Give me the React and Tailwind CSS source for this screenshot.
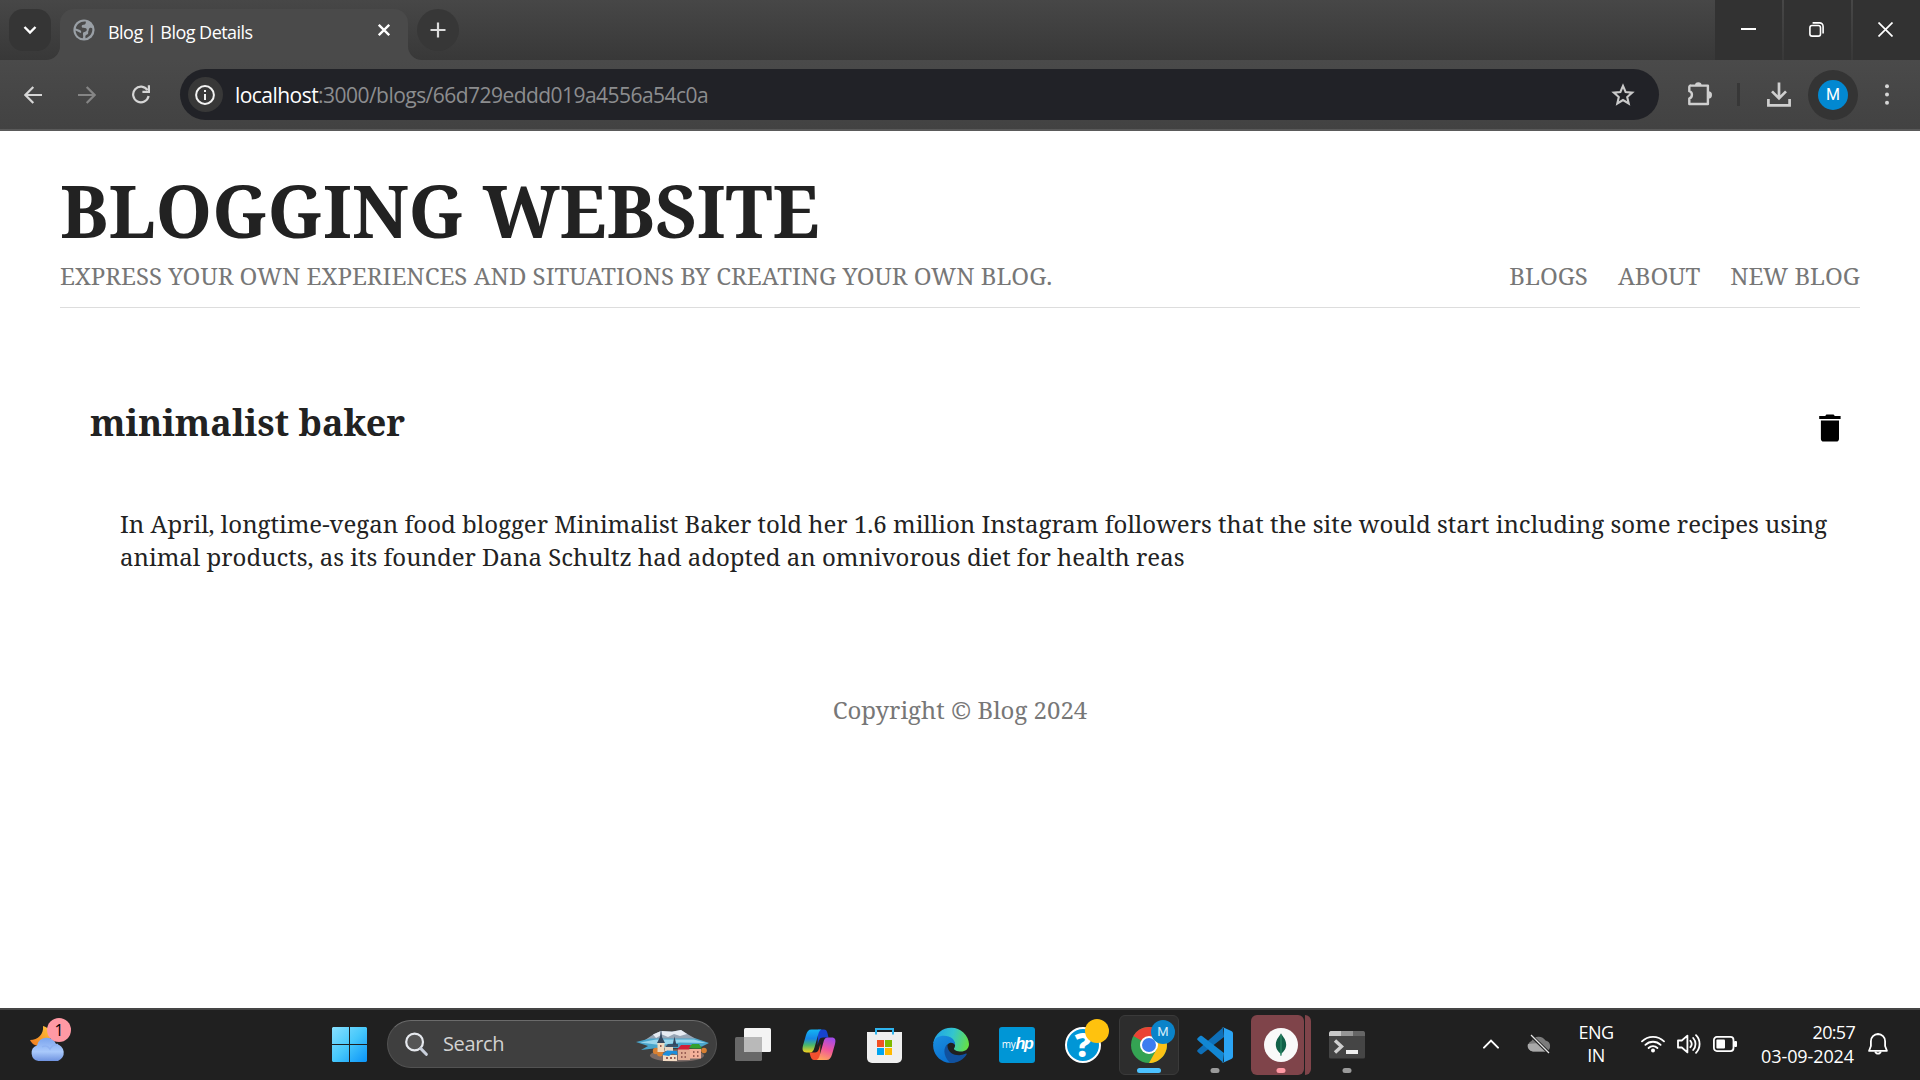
function ChromeTabStrip() {
  return (
    <div className="flex h-[60px] w-full bg-gradient-to-b from-[#474747] to-[#383838]">
      <div className="flex h-[60px] w-[60px] shrink-0 items-start pt-[9px] pl-[9px]">
        <button className="flex h-[42px] w-[42px] items-center justify-center rounded-[14px] bg-[#353535]">
          <svg width="14" height="10" viewBox="0 0 14 10" fill="none" stroke="#fff" strokeWidth="2.4">
            <path d="M1.5 2 L7 7.5 L12.5 2" />
          </svg>
        </button>
      </div>
      <div className="relative mt-[9px] h-[51px] w-[348px] shrink-0">
        <div className="flex h-full w-full items-center rounded-t-[14px] bg-[#4a4a4a] pl-[13px]">
          <svg className="mb-[10px]" width="22" height="22" viewBox="0 0 22 22">
            <circle cx="11" cy="11" r="10.6" fill="#9aa0a6" />
            <path d="M13 2.7 C12.4 4.6 12.8 5.6 10.6 5.7 C8.6 5.8 8.6 7 8.8 8 C9 9 9.9 8.8 11.8 8.9 C14 9 14.2 10.8 13.4 12 C12.5 13.2 10.4 12.6 10 14 C9.6 15.6 10.8 17 9.8 19.3 C5.6 18.8 2.8 15.4 2.6 11.4 L7.6 13.9 C8.8 13.4 8.2 11.6 7 10.9 L2.8 9.4 C3.6 5.2 8 1.9 13 2.7 Z" fill="#4a4a4a" />
            <path d="M16.4 9.2 C17.6 8.4 18.8 8.6 19.3 9.6 C19.8 14.2 16.8 18.2 12.6 19.3 C11.9 17.3 12.6 16.2 14 15.6 C16.2 14.6 14.6 13.2 15.4 12 C16 11.2 15.4 10 16.4 9.2 Z" fill="#4a4a4a" />
          </svg>
          <span className="mb-[6px] ml-[13px] grow whitespace-nowrap font-['Open_Sans',sans-serif] text-[18px] leading-6 tracking-[-0.53px] text-white">
            Blog | Blog Details
          </span>
          <svg className="mr-[18px] mb-[9px]" width="12" height="12" viewBox="0 0 12 12" stroke="#fff" strokeWidth="2.3">
            <path d="M0.8 0.8 L11.2 11.2 M11.2 0.8 L0.8 11.2" />
          </svg>
        </div>
        <svg className="absolute bottom-0 -left-[14px]" width="14" height="14" viewBox="0 0 14 14">
          <path d="M14 0 V14 H0 A14 14 0 0 0 14 0 Z" fill="#4a4a4a" />
        </svg>
        <svg className="absolute -right-[14px] bottom-0" width="14" height="14" viewBox="0 0 14 14">
          <path d="M0 0 V14 H14 A14 14 0 0 1 0 0 Z" fill="#4a4a4a" />
        </svg>
      </div>
      <button className="mt-[9px] ml-[9px] flex h-[42px] w-[42px] shrink-0 items-center justify-center rounded-full bg-[#373737]">
        <svg width="16" height="16" viewBox="0 0 16 16" stroke="#dcdcdc" strokeWidth="2.2">
          <path d="M8 0.5 V15.5 M0.5 8 H15.5" />
        </svg>
      </button>
      <div className="grow" />
      <div className="flex gap-[2px]">
        <button className="flex h-[60px] w-[67px] items-center justify-center bg-[#323232]">
          <svg className="mb-[2px]" width="15" height="2" viewBox="0 0 15 2">
            <rect width="15" height="2" fill="#fff" />
          </svg>
        </button>
        <button className="flex h-[60px] w-[67px] items-center justify-center bg-[#323232]">
          <svg className="mr-[2px] mb-[1px]" width="15" height="15" viewBox="0 0 15 15" fill="none" stroke="#fff" strokeWidth="1.6">
            <rect x="0.9" y="3.5" width="10.6" height="10.6" rx="2.2" />
            <path d="M3.6 0.9 H10.6 A3.5 3.5 0 0 1 14.1 4.4 V11.4" />
          </svg>
        </button>
        <button className="flex h-[60px] w-[67px] items-center justify-center bg-[#323232]">
          <svg className="mr-[3px] mb-[1px]" width="15" height="15" viewBox="0 0 15 15" stroke="#fff" strokeWidth="1.7">
            <path d="M0.5 0.5 L14.5 14.5 M14.5 0.5 L0.5 14.5" />
          </svg>
        </button>
      </div>
    </div>
  );
}

function Toolbar() {
  return (
    <div className="flex h-[71px] w-full items-center border-b-2 border-[#5a5a5a] bg-gradient-to-b from-[#4a4a4a] to-[#424242]">
      <svg className="ml-[24px] shrink-0" width="18" height="18" viewBox="0 0 18 18" fill="none" stroke="#d6d6d6" strokeWidth="2.2">
        <path d="M18 9 H1.8 M9.3 1 L1.4 9 L9.3 17" />
      </svg>
      <svg className="ml-[36px] shrink-0" width="18" height="18" viewBox="0 0 18 18" fill="none" stroke="#858585" strokeWidth="2.2">
        <path d="M0 9 H16.2 M8.7 1 L16.6 9 L8.7 17" />
      </svg>
      <svg className="ml-[36px] shrink-0" width="18" height="19" viewBox="0 0 18 19" fill="none" stroke="#d6d6d6" strokeWidth="2.2">
        <path d="M15.5 5.2 A7.8 7.8 0 1 0 16.6 11" />
        <path d="M16.9 0.3 V6.8 H10.4" />
      </svg>
      <div className="ml-[30px] flex h-[51px] w-[1479px] shrink-0 items-center rounded-full bg-[#212227] pl-[8px]">
        <span className="flex h-[35px] w-[35px] items-center justify-center rounded-full bg-[#383838]">
          <svg className="mr-px" width="20" height="20" viewBox="0 0 20 20">
            <circle cx="10" cy="10" r="8.9" fill="none" stroke="#f2f2f2" strokeWidth="2" />
            <rect x="9" y="5" width="2" height="2" fill="#f2f2f2" />
            <rect x="9" y="9" width="2" height="6" fill="#f2f2f2" />
          </svg>
        </span>
        <span className="ml-[12px] grow whitespace-nowrap font-['Open_Sans',sans-serif] text-[21px] leading-7 tracking-[-0.54px] text-[#8c8d8f]">
          <span className="text-white">localhost</span>:3000/blogs/66d729eddd019a4556a54c0a
        </span>
        <svg className="mr-[24px]" width="24" height="24" viewBox="0 0 24 24" fill="none" stroke="#c9c9c9" strokeWidth="2.1">
          <path d="M12 2.9 L14.6 9 L21.2 9.6 L16.2 14 L17.7 20.5 L12 17 L6.3 20.5 L7.8 14 L2.8 9.6 L9.4 9 Z" />
        </svg>
      </div>
      <svg className="mb-[2px] ml-[28px] shrink-0" width="26" height="25" viewBox="0 0 26 25">
        <path d="M4 4.6 H20.9 V23 H2.3 V17.4 C5.8 16.6 5.8 11.1 2.3 10.2 V6 A1.4 1.4 0 0 1 4 4.6 Z" fill="none" stroke="#cfcfcf" strokeWidth="2.4" strokeLinejoin="round" />
        <path d="M8 4.5 A3.3 3.3 0 0 1 14.6 4.5 Z M21.4 10.3 A3.6 3.6 0 0 1 21.4 17.5 Z" fill="#cfcfcf" />
      </svg>
      <div className="ml-[24px] h-[23px] w-[3px] shrink-0 bg-[#373737]" />
      <svg className="ml-[27px] shrink-0" width="24" height="25" viewBox="0 0 24 25" fill="none" stroke="#cfcfcf" strokeWidth="2.7">
        <path d="M12 0.5 V16 M5 9.4 L12 16.4 L19 9.4 M1.4 17 V23.4 H22.6 V17" />
      </svg>
      <div className="ml-[17px] flex h-[50px] w-[50px] shrink-0 items-center justify-center rounded-full bg-[#343434]">
        <span className="flex h-[30px] w-[30px] items-center justify-center rounded-full bg-[#0288d1] pt-px font-[Roboto,sans-serif] text-[16px] leading-none text-white">
          M
        </span>
      </div>
      <svg className="ml-[27px] shrink-0" width="4" height="21" viewBox="0 0 4 21" fill="#d6d6d6">
        <circle cx="2" cy="2.2" r="2" />
        <circle cx="2" cy="10.5" r="2" />
        <circle cx="2" cy="18.8" r="2" />
      </svg>
    </div>
  );
}

function BlogPage() {
  return (
    <div className="flex h-[877px] w-full flex-col bg-white px-[60px] pt-[30px] font-['Noto_Serif',serif] text-[24px] leading-[33px] text-[#222222]">
      <header className="border-b border-[#dddddd] pb-[15px]">
        <h1 className="text-[72px] leading-[98px] font-bold whitespace-nowrap">BLOGGING WEBSITE</h1>
        <div className="flex justify-between whitespace-nowrap text-[#777777]">
          <p>EXPRESS YOUR OWN EXPERIENCES AND SITUATIONS BY CREATING YOUR OWN BLOG.</p>
          <nav className="flex gap-[30px]">
            <a>BLOGS</a>
            <a>ABOUT</a>
            <a>NEW BLOG</a>
          </nav>
        </div>
      </header>
      <main className="mt-[90px] px-[30px]">
        <div className="flex items-start justify-between">
          <h2 className="text-[36px] leading-[49px] font-bold whitespace-nowrap">minimalist baker</h2>
          <svg className="mt-[16px] -mr-[11px]" width="22" height="28" viewBox="0 0 22 28" fill="#000">
            <path d="M6.2 2 L7.4 0.6 H14.6 L15.8 2 H21.6 V5 H0.2 V2 Z" />
            <path d="M1.9 6.4 H20 V24.8 A2.8 2.8 0 0 1 17.2 27.6 H4.7 A2.8 2.8 0 0 1 1.9 24.8 Z" />
          </svg>
        </div>
        <p className="mt-[60px] ml-[30px] whitespace-nowrap">
          In April, longtime-vegan food blogger Minimalist Baker told her 1.6 million Instagram followers that the site would start including some recipes using
          <br />
          animal products, as its founder Dana Schultz had adopted an omnivorous diet for health reas
        </p>
      </main>
      <footer className="mt-[120px] text-center text-[#777777]">Copyright © Blog 2024</footer>
    </div>
  );
}

function VillageArt() {
  return (
    <svg width="74" height="36" viewBox="0 0 74 36">
      <path d="M9 13 L18 7 L25 4 L36 4.5 L45 3 L53 8 L62 13 Z" fill="#97a5b5" />
      <path d="M17 7.5 L25 4 L36 4.8 L45 3 L51 7 L44 9 L38 7 L32 10 L26 7.5 L20 11 Z" fill="#e6ebf2" />
      <path d="M0 15 L14 11.5 H60 L73 16 L66 19.5 L58 21 H22 L5 23 L12 19 Z" fill="#4aa5cb" />
      <path d="M4 15.5 L20 12.5 L58 12.5 L70 16 L44 15.5 L24 18 Z" fill="#9ad6ec" />
      <ellipse cx="41" cy="28.5" rx="27" ry="6.3" fill="#7b6a66" />
      <g fill="#d98032">
        <circle cx="20" cy="24" r="3.2" />
        <circle cx="25" cy="23" r="3" />
        <circle cx="24" cy="26.5" r="3" />
        <circle cx="68" cy="23.5" r="2.8" />
      </g>
      <path d="M21.5 16 H28.5 V25 H21.5 Z" fill="#efd9bf" />
      <path d="M21 16 L24 10 L25 0.5 L26 10 L29 16 Z" fill="#33475f" />
      <path d="M29 19 L37 18 V24 H29 Z" fill="#e8d5c2" />
      <path d="M29 20 L32 17 H42 V20 Z" fill="#3a5068" />
      <path d="M36.6 18 L38.5 9.5 L40.4 18 Z" fill="#33475f" />
      <path d="M42 22 H54 V33 H42 Z" fill="#e3ad94" />
      <path d="M41 22.5 L45 18 H55 L53 22.5 Z" fill="#d01f37" />
      <path d="M54 22 H65 V31.5 H54 Z" fill="#f5b09a" />
      <path d="M53 21 L56 17 H63 L66 21.5 H57 Z" fill="#33a02c" />
      <path d="M27 28 H41 V34 H27 Z" fill="#f3dcc4" />
      <path d="M26 28 L31 23.5 L41 24 L41.5 28 L36 26.5 L33 29 Z" fill="#1c8fdd" />
      <path d="M30 30h2v2h-2z M34 30h2v2h-2z M38 30h1.5v2H38z M45 25h1.5v2H45z M48.5 25H50v2h-1.5z M45 29h1.5v2H45z M48.5 29H50v2h-1.5z M57 24h1.5v2H57z M61 24h1.5v2H61z M57 28h1.5v2H57z M61 28h1.5v2H61z M24 18h1.5v2H24z" fill="#9a5f54" />
    </svg>
  );
}

function Slot({ children, pill }) {
  return (
    <div className="relative flex h-full w-[66px] shrink-0 items-center justify-center pb-px">
      {children}
      {pill && <span className={"absolute top-[58px] left-1/2 h-[5px] -translate-x-1/2 rounded-full " + pill} />}
    </div>
  );
}

function Taskbar() {
  return (
    <div className="flex h-[72px] w-full items-stretch border-t-2 border-[#454545] bg-[#202020] font-['Open_Sans',sans-serif] text-white">
      <div className="relative ml-[30px] w-[40px] shrink-0">
        <svg className="mt-[16px]" width="36" height="36" viewBox="0 0 36 36">
          <defs>
            <linearGradient id="moon" x1="1" y1="0" x2="0" y2="1">
              <stop offset="0" stopColor="#ffc83d" />
              <stop offset="1" stopColor="#f0761b" />
            </linearGradient>
            <linearGradient id="cloud" x1="0" y1="0" x2="0" y2="1">
              <stop offset="0" stopColor="#7ba4ee" />
              <stop offset="0.6" stopColor="#a9c9fb" />
              <stop offset="1" stopColor="#6f93e0" />
            </linearGradient>
          </defs>
          <path d="M13 0 C14 8 8 14 0 14 C2 18.5 6 20 10 20 H20 V4 C18 2 16 1 13 0 Z" fill="url(#moon)" />
          <path d="M8.5 35 A8 8 0 0 1 7 19.5 A10 10 0 0 1 26 18 A8.8 8.8 0 0 1 28 35 Z" fill="url(#cloud)" />
          <path d="M12 21 C15 19 18 20 20 23 C22 19.5 25 18.3 28 18.5" fill="none" stroke="#8fb2f2" strokeWidth="1.5" />
        </svg>
        <span className="absolute top-[8px] left-[17px] flex h-[24px] w-[24px] items-center justify-center rounded-full bg-[#ff99a4] text-[16px] leading-none text-black">
          1
        </span>
      </div>

      <svg className="mt-[17px] ml-[262px] shrink-0" width="35" height="35" viewBox="0 0 35 35">
        <defs>
          <linearGradient id="win" x1="0" y1="0" x2="1" y2="1">
            <stop offset="0" stopColor="#88e0ff" />
            <stop offset="0.5" stopColor="#46c8fb" />
            <stop offset="1" stopColor="#0a93f8" />
          </linearGradient>
        </defs>
        <path d="M1 0H17V17H0V1Z M18 0H34L35 1V17H18Z M0 18H17V35H1L0 34Z M18 18H35V34L34 35H18Z" fill="url(#win)" />
      </svg>

      <div className="mt-[10px] ml-[20px] flex h-[48px] w-[330px] shrink-0 items-center rounded-full border border-[#525252] border-t-[#6b6b6b] bg-[#3f3f3f] pl-[17px]">
        <svg width="23" height="24" viewBox="0 0 23 24">
          <circle cx="9.6" cy="10" r="8.4" fill="#555" stroke="#e6e9ee" strokeWidth="2.2" />
          <path d="M15.6 16.4 L21.3 22.3" stroke="#c9d0dc" strokeWidth="3" strokeLinecap="round" />
        </svg>
        <span className="ml-[15px] grow text-[20px] leading-7 tracking-[-0.35px] text-[#d2d2d2]">Search</span>
        <div className="mr-[6px] mt-px">
          <VillageArt />
        </div>
      </div>

      <div className="ml-[3px] flex">
        <Slot>
          <svg width="36" height="35" viewBox="0 0 36 35">
            <rect x="0" y="10" width="27" height="24" rx="1.5" fill="#686868" />
            <rect x="9" y="1" width="27" height="24" rx="1.5" fill="#f4f4f4" />
            <path d="M9 10 H27 V25 H10.5 L9 23.5 Z" fill="#b9b9b9" />
          </svg>
        </Slot>
        <Slot>
          <svg width="34" height="32" viewBox="0 0 34 32">
            <defs>
              <linearGradient id="cpA" x1="0" y1="0" x2="0" y2="1">
                <stop offset="0" stopColor="#13b5f4" />
                <stop offset="0.4" stopColor="#1686e6" />
                <stop offset="0.68" stopColor="#4cb86a" />
                <stop offset="1" stopColor="#f6d11d" />
              </linearGradient>
              <linearGradient id="cpB" x1="0.6" y1="0" x2="0.3" y2="1">
                <stop offset="0" stopColor="#a34be8" />
                <stop offset="0.5" stopColor="#f0569c" />
                <stop offset="1" stopColor="#ffa45c" />
              </linearGradient>
            </defs>
            <path d="M16 0.5 H22 C25 0.5 25.5 4 26.5 8.5 H21 C17 8.5 17 12 15.6 16 Z" fill="#1743cf" />
            <path d="M18 31 H12 C9 31 8.5 27 7.5 23.5 H13 C17 23.5 17 19 18.4 15 Z" fill="#f3502f" />
            <path d="M9.5 0.5 H19.5 C17 1.5 16.5 4.5 15.5 8 L12.5 18.5 C11.5 22 10.5 23.5 8 23.5 H4.5 C0.5 23.5 0 20.5 1 16.5 L4 6 C5 2.5 6.5 0.5 9.5 0.5 Z" fill="url(#cpA)" />
            <path d="M24.5 31 H14.5 C17 30 17.5 27 18.5 23.5 L21.5 13 C22.5 9.5 23.5 8.5 26 8.5 H29.5 C33.5 8.5 34 11 33 15 L30 25.5 C29 29 27.5 31 24.5 31 Z" fill="url(#cpB)" />
          </svg>
        </Slot>
        <Slot>
          <svg className="mt-px mr-px" width="35" height="35" viewBox="0 0 35 35">
            <path d="M0 4 H35 V30 A5 5 0 0 1 30 35 H5 A5 5 0 0 1 0 30 Z" fill="#efefef" />
            <path d="M9 6.5 V1 H26 V6.5" fill="none" stroke="#2fb4ee" strokeWidth="2" />
            <rect x="10" y="12" width="7" height="7" fill="#f25022" />
            <rect x="18" y="12" width="7" height="7" fill="#7fba00" />
            <rect x="10" y="20" width="7" height="7" fill="#00a4ef" />
            <rect x="18" y="20" width="7" height="7" fill="#ffb900" />
          </svg>
        </Slot>
        <Slot>
          <svg width="36" height="36" viewBox="0 0 36 36">
            <defs>
              <linearGradient id="edTop" x1="0" y1="0.4" x2="1" y2="0.6">
                <stop offset="0" stopColor="#1fa3e6" />
                <stop offset="0.5" stopColor="#33c5cf" />
                <stop offset="1" stopColor="#65e045" />
              </linearGradient>
              <linearGradient id="edL" x1="0" y1="0" x2="0.6" y2="1">
                <stop offset="0" stopColor="#1a8fe0" />
                <stop offset="1" stopColor="#0a6fce" />
              </linearGradient>
            </defs>
            <path d="M0.3 16 A18 18 0 0 1 36 17 C36 22 32 24.5 28 24.5 C24 24.5 20.5 23 21 21.5 C23 19 22.5 14 18 13.5 Z" fill="url(#edTop)" />
            <path d="M0.2 17 C1 11 6 8.8 11 8.8 C18 8.8 22.5 13 22 18 C19 13.5 13 16 13 22 C13 28 18 33.5 26 33.3 C22 36 17 36.3 13.5 35.4 C5.5 33.5 -0.6 26 0.2 17 Z" fill="url(#edL)" />
            <path d="M14.5 17 C10 21 10 29 17 35.8 C24 36.6 30.5 32.5 33.6 27.4 C34 26.5 33 26.4 32.4 26.8 C26 30 13.5 28 14.5 17 Z" fill="#11519e" />
          </svg>
        </Slot>
        <Slot>
          <div className="flex h-[36px] w-[36px] items-center justify-center rounded-[3px] bg-[#0096d6] pb-px leading-none whitespace-nowrap">
            <span className="text-[10px] tracking-[-0.2px]">my</span>
            <span className="font-['Liberation_Sans',sans-serif] text-[16px] font-bold tracking-[-1.4px] italic">hp</span>
          </div>
        </Slot>
        <Slot>
          <div className="flex h-[36px] w-[36px] items-center justify-center rounded-full border-2 border-white bg-[#0096d6] text-[33px] leading-none font-extrabold">
            ?
          </div>
          <span className="absolute top-[9px] left-[35px] h-[24px] w-[24px] rounded-full bg-[#ffc20e]" />
        </Slot>
        <Slot pill="z-10 w-[24px] bg-[#4cc2ff]">
          <div className="relative flex h-[60px] w-[60px] items-center justify-center rounded-[6px] border border-[#3a3a3a] bg-[#2d2d2d]">
            <svg width="36" height="36" viewBox="0 0 36 36">
              <circle cx="18" cy="18" r="18" fill="#34a353" />
              <path d="M18 18 L2.4 9 A18 18 0 0 1 33.6 9 Z" fill="#ea4335" />
              <path d="M18 9.5 H33.8 A18 18 0 0 1 18 36 L25.5 22.5 Z" fill="#fbc116" />
              <circle cx="18" cy="18" r="9" fill="#fff" />
              <circle cx="18" cy="18" r="7" fill="#3c7df0" />
            </svg>
            <span className="absolute top-[4px] left-[31px] flex h-[24px] w-[24px] items-center justify-center rounded-full bg-[#0a83c9] font-[Roboto,sans-serif] text-[13px] leading-none text-[#d4ecfa]">
              M
            </span>
          </div>
        </Slot>
        <Slot pill="w-[9px] bg-[#9a9a9a]">
          <svg width="36" height="36" viewBox="0 0 36 36">
            <path d="M26 0.5 L0.8 22.7 C0 23.5 0 24.2 0.8 25 L3 26.9 C3.6 27.4 4.4 27.4 5 26.9 L27 10 Z" fill="#0e6fb8" />
            <path d="M26 35.5 L0.8 13.3 C0 12.5 0 11.8 0.8 11 L3 9.1 C3.6 8.6 4.4 8.6 5 9.1 L27 26 Z" fill="#1287d4" />
            <path d="M26 0.2 L34.3 4 C35.4 4.6 36 5.4 36 6.5 V29.5 C36 30.6 35.4 31.4 34.3 32 L26 35.8 C25.6 35.9 24.8 35.7 24.4 35.2 C25.8 36 27 35 27 33.8 V2.2 C27 1 25.8 0 24.4 0.8 C24.8 0.3 25.6 0.1 26 0.2 Z" fill="#2ba4f4" />
          </svg>
        </Slot>
        <Slot pill="w-[9px] bg-[#ff99a4]">
          <div className="flex h-[60px] w-[60px] gap-px">
            <div className="flex w-[53px] items-center justify-center rounded-[6px] bg-[#7f444a] pl-[7px]">
              <svg width="34" height="34" viewBox="0 0 34 34">
                <circle cx="17" cy="17" r="17" fill="#f9f9f9" />
                <path d="M17 5.2 C18 8 22 10.5 22.2 16.5 C22.2 21 19.5 23.8 17.6 25.5 L17.3 28 H16.6 L16.3 25.5 C14.4 23.8 11.8 21 11.8 16.5 C12 10.5 16 8 17 5.2 Z" fill="#116149" />
                <path d="M17 7 V27" stroke="#3fa37b" strokeWidth="0.8" />
              </svg>
            </div>
            <div className="w-[6px] rounded-r-[6px] bg-[#7f444a]" />
          </div>
        </Slot>
        <Slot pill="w-[9px] bg-[#9a9a9a]">
          <svg width="36" height="28" viewBox="0 0 36 28">
            <rect width="36" height="27.5" rx="1.5" fill="#454545" />
            <path d="M1.5 0 H12 V5 H0 V1.5 Z" fill="#c9c9c9" />
            <rect x="12" width="12" height="5" fill="#969696" />
            <path d="M24 0 H34.5 L36 1.5 V5 H24 Z" fill="#666" />
            <path d="M6 9.5 L12.5 15.5 L6 21.5" fill="none" stroke="#d0d0d0" strokeWidth="3.4" />
            <rect x="17" y="19" width="12" height="4" fill="#efefef" />
          </svg>
        </Slot>
      </div>

      <div className="grow" />

      <div className="flex shrink-0 items-center pb-[2px]">
        <svg width="16" height="10" viewBox="0 0 16 10" fill="none" stroke="#fff" strokeWidth="2" strokeLinecap="round">
          <path d="M1 8.6 L8 1.6 L15 8.6" />
        </svg>
        <svg className="ml-[28px]" width="24" height="20" viewBox="0 0 24 20">
          <path d="M6 17.5 A5.5 5.5 0 0 1 4.5 7 A8 8 0 0 1 18.5 6.6 A5.6 5.6 0 0 1 19 17.5 Z" fill="#7b7b7b" />
          <path d="M6 17.5 A5.6 5.6 0 0 1 1 10 L12 9 L19 17.5 Z" fill="#a9a9a9" />
          <path d="M3.5 1 L22 19" stroke="#202020" strokeWidth="3.2" />
          <path d="M4 1 L22 19" stroke="#e6e6e6" strokeWidth="1.3" />
        </svg>
        <div className="ml-[27px] w-[36px] text-center text-[18px] leading-[23px] tracking-[-0.5px]">
          <div>ENG</div>
          <div>IN</div>
        </div>
        <svg className="mb-px ml-[27px]" width="24" height="18" viewBox="0 0 24 18" fill="none" stroke="#fff" strokeWidth="1.8" strokeLinecap="round">
          <path d="M1 6.4 A15.6 15.6 0 0 1 23 6.4 M4.4 9.9 A10.8 10.8 0 0 1 19.6 9.9 M7.6 13 A6.2 6.2 0 0 1 16.4 13" />
          <circle cx="12" cy="15.6" r="2" fill="#fff" stroke="none" />
        </svg>
        <svg className="ml-[12px]" width="24" height="20" viewBox="0 0 24 20" fill="none" stroke="#fff" strokeWidth="1.8" strokeLinecap="round" strokeLinejoin="round">
          <path d="M1 6.5 H4.8 L10.4 1.6 V18.4 L4.8 13.5 H1 Z" />
          <path d="M13.4 6.8 A5 5 0 0 1 13.4 13.2 M16.2 4 A9 9 0 0 1 16.2 16 M19 1.2 A12.6 12.6 0 0 1 19 18.8" />
        </svg>
        <svg className="ml-[12px]" width="24" height="16" viewBox="0 0 24 16">
          <rect x="0.9" y="0.9" width="19.6" height="14.2" rx="3" fill="none" stroke="#fff" strokeWidth="1.8" />
          <rect x="3.4" y="3.6" width="8.6" height="8.8" rx="1" fill="#fff" />
          <rect x="21" y="5" width="3" height="6" rx="1" fill="#fff" />
        </svg>
        <div className="ml-[22px] w-[95px] text-right text-[18px] leading-[24px] whitespace-nowrap">
          <div className="-mr-px tracking-[-0.7px]">20:57</div>
          <div className="tracking-[-0.1px]">03-09-2024</div>
        </div>
        <svg className="mr-[32px] ml-[14px]" width="20" height="23" viewBox="0 0 20 23" fill="none" stroke="#fff" strokeWidth="1.8" strokeLinejoin="round">
          <path d="M10 1 A7.2 7.2 0 0 0 2.9 8.2 V13 L1.1 17.8 H18.9 L17.1 13 V8.2 A7.2 7.2 0 0 0 10 1 Z" />
          <path d="M7.2 18.4 A2.9 2.9 0 0 0 12.8 18.4" />
        </svg>
      </div>
    </div>
  );
}

export default function App() {
  return (
    <div className="flex h-[1080px] w-[1920px] flex-col overflow-hidden">
      <ChromeTabStrip />
      <Toolbar />
      <BlogPage />
      <Taskbar />
    </div>
  );
}
